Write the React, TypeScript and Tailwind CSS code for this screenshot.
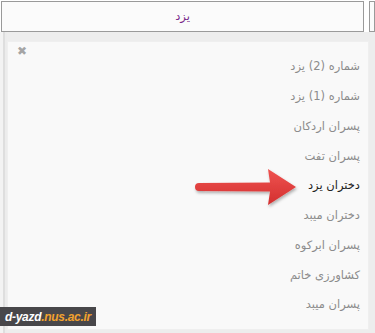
import React from 'react';

const ITEMS = [
  'شماره (2) یزد',
  'شماره (1) یزد',
  'پسران اردکان',
  'پسران تفت',
  'دختران یزد',
  'دختران میبد',
  'پسران ابرکوه',
  'کشاورزی خاتم',
  'پسران میبد',
];

const ACTIVE = 'دختران یزد';

function Arrow() {
  return (
    <svg width="110" height="44" viewBox="0 0 110 44" className="absolute left-[190px] top-[165px]">
      <defs>
        <linearGradient id="shaft" x1="0" y1="0" x2="0" y2="1">
          <stop offset="0" stopColor="#ef5350" />
          <stop offset="1" stopColor="#d32f2f" />
        </linearGradient>
        <filter id="sh" x="-10%" y="-20%" width="130%" height="150%">
          <feDropShadow dx="1" dy="2" stdDeviation="1.5" floodColor="#000" floodOpacity="0.3" />
        </filter>
      </defs>
      <g filter="url(#sh)">
        <path d="M9 18 L80 17.5 L78 4 L106 22 L78 40 L80 26.5 L9 26 A4 4 0 0 1 9 18 Z" fill="url(#shaft)" />
      </g>
    </svg>
  );
}

export default function App() {
  return (
    <div className="relative w-[375px] h-[333px] bg-white overflow-hidden" style={{ fontFamily: '"DejaVu Sans", sans-serif' }}>
      <div className="flex h-[32px] pt-px pl-px gap-[5px]">
        <div className="w-[363px] h-[31px] border border-[#9a9a9a] bg-[#fbfbfb] flex items-center justify-center text-[11.5px] text-[#7a2a8a]" dir="rtl">
          یزد
        </div>
        <div className="flex-1 h-[31px] border border-[#9a9a9a] bg-[#fbfbfb]" />
      </div>
      <div className="flex h-[301px] bg-[#ededed]">
        <div className="w-[7px] flex">
          <div className="w-[3px] bg-[#f3f3f3]" />
          <div className="w-[2px] bg-[#dedede]" />
          <div className="w-[2px] bg-[#ececec]" />
        </div>
        <div className="mt-[9px] mb-[3px] w-[362px] bg-[#f9f9f9] border border-[#efefef] relative flex flex-col pt-[10px]">
          <span className="absolute left-[9px] top-[3px] text-[12px] font-bold text-[#a5a5a5] leading-none">✖</span>
          <ul dir="rtl" className="flex flex-col pr-[8px]">
            {ITEMS.map((it) => (
              <li
                key={it}
                className={`h-[29.75px] flex items-center text-[11.5px] ${it === ACTIVE ? 'text-[#222]' : 'text-[#8c8c8c]'}`}
              >
                {it}
              </li>
            ))}
          </ul>
        </div>
      </div>
      <Arrow />
      <div
        className="absolute left-0 top-[307px] w-[96px] h-[19px] bg-[#48474a] flex items-center pl-[5px] text-[12px] font-bold italic leading-none whitespace-nowrap tracking-[-0.3px]"
        style={{ fontFamily: '"Liberation Sans", sans-serif' }}
      >
        <span className="text-white">d-yazd</span>
        <span className="text-[#f2a22e]">.nus.ac.ir</span>
      </div>
    </div>
  );
}
